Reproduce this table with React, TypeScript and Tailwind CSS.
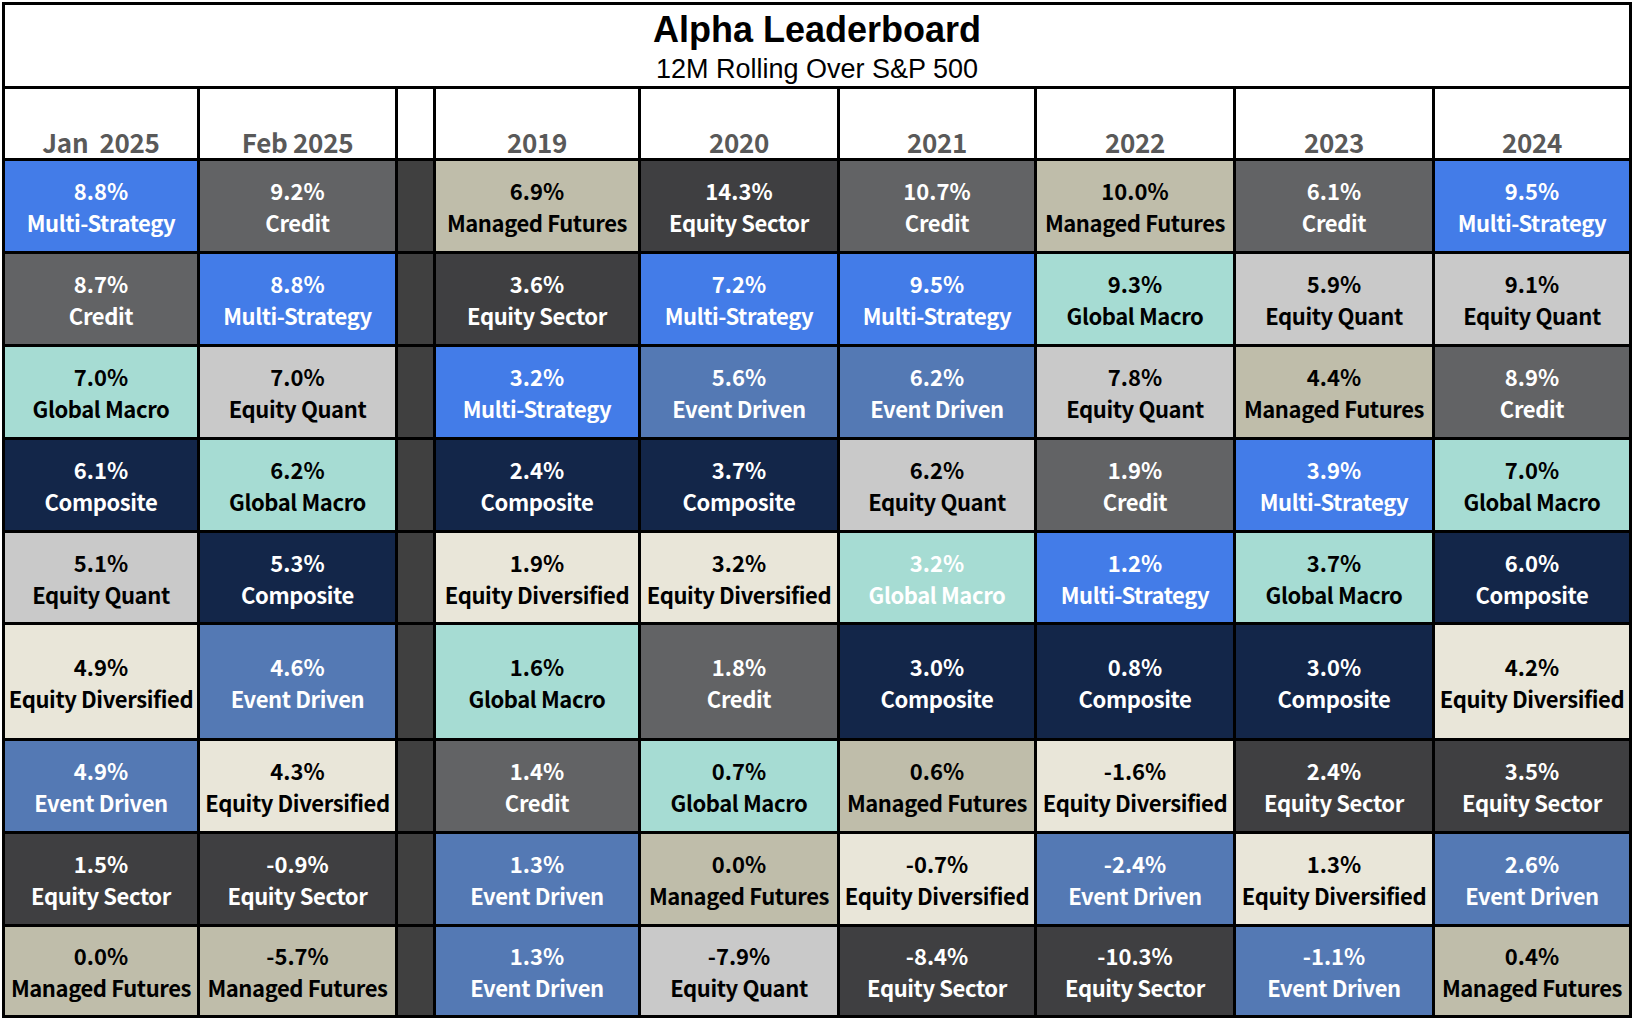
import React from "react";

type Cat =
  | "Multi-Strategy"
  | "Credit"
  | "Global Macro"
  | "Composite"
  | "Equity Quant"
  | "Equity Diversified"
  | "Event Driven"
  | "Equity Sector"
  | "Managed Futures";

const STYLE: Record<Cat, string> = {
  "Multi-Strategy": "bg-[#437ce8] text-white",
  Credit: "bg-[#626365] text-white",
  "Global Macro": "bg-[#a6dcd3] text-black",
  Composite: "bg-[#132649] text-white",
  "Equity Quant": "bg-[#c9c9c9] text-black",
  "Equity Diversified": "bg-[#e9e6d9] text-black",
  "Event Driven": "bg-[#5479b4] text-white",
  "Equity Sector": "bg-[#3f3f41] text-white",
  "Managed Futures": "bg-[#bfbdaa] text-black",
};

type Cell = [string, Cat, boolean?];

const LEFT: Cell[][] = [
  [["8.8%", "Multi-Strategy"], ["9.2%", "Credit"]],
  [["8.7%", "Credit"], ["8.8%", "Multi-Strategy"]],
  [["7.0%", "Global Macro"], ["7.0%", "Equity Quant"]],
  [["6.1%", "Composite"], ["6.2%", "Global Macro"]],
  [["5.1%", "Equity Quant"], ["5.3%", "Composite"]],
  [["4.9%", "Equity Diversified"], ["4.6%", "Event Driven"]],
  [["4.9%", "Event Driven"], ["4.3%", "Equity Diversified"]],
  [["1.5%", "Equity Sector"], ["-0.9%", "Equity Sector"]],
  [["0.0%", "Managed Futures"], ["-5.7%", "Managed Futures"]],
];

const RIGHT: Cell[][] = [
  [
    ["6.9%", "Managed Futures"],
    ["14.3%", "Equity Sector"],
    ["10.7%", "Credit"],
    ["10.0%", "Managed Futures"],
    ["6.1%", "Credit"],
    ["9.5%", "Multi-Strategy"],
  ],
  [
    ["3.6%", "Equity Sector"],
    ["7.2%", "Multi-Strategy"],
    ["9.5%", "Multi-Strategy"],
    ["9.3%", "Global Macro"],
    ["5.9%", "Equity Quant"],
    ["9.1%", "Equity Quant"],
  ],
  [
    ["3.2%", "Multi-Strategy"],
    ["5.6%", "Event Driven"],
    ["6.2%", "Event Driven"],
    ["7.8%", "Equity Quant"],
    ["4.4%", "Managed Futures"],
    ["8.9%", "Credit"],
  ],
  [
    ["2.4%", "Composite"],
    ["3.7%", "Composite"],
    ["6.2%", "Equity Quant"],
    ["1.9%", "Credit"],
    ["3.9%", "Multi-Strategy"],
    ["7.0%", "Global Macro"],
  ],
  [
    ["1.9%", "Equity Diversified"],
    ["3.2%", "Equity Diversified"],
    ["3.2%", "Global Macro", true],
    ["1.2%", "Multi-Strategy"],
    ["3.7%", "Global Macro"],
    ["6.0%", "Composite"],
  ],
  [
    ["1.6%", "Global Macro"],
    ["1.8%", "Credit"],
    ["3.0%", "Composite"],
    ["0.8%", "Composite"],
    ["3.0%", "Composite"],
    ["4.2%", "Equity Diversified"],
  ],
  [
    ["1.4%", "Credit"],
    ["0.7%", "Global Macro"],
    ["0.6%", "Managed Futures"],
    ["-1.6%", "Equity Diversified"],
    ["2.4%", "Equity Sector"],
    ["3.5%", "Equity Sector"],
  ],
  [
    ["1.3%", "Event Driven"],
    ["0.0%", "Managed Futures"],
    ["-0.7%", "Equity Diversified"],
    ["-2.4%", "Event Driven"],
    ["1.3%", "Equity Diversified"],
    ["2.6%", "Event Driven"],
  ],
  [
    ["1.3%", "Event Driven"],
    ["-7.9%", "Equity Quant"],
    ["-8.4%", "Equity Sector"],
    ["-10.3%", "Equity Sector"],
    ["-1.1%", "Event Driven"],
    ["0.4%", "Managed Futures"],
  ],
];

const ROW_H = [
  "h-[90px]",
  "h-[90px]",
  "h-[90px]",
  "h-[90px]",
  "h-[89px]",
  "h-[113px]",
  "h-[90px]",
  "h-[90px]",
  "h-[88px]",
];

const HEADERS = ["Jan\u00a0 2025", "Feb 2025", "", "2019", "2020", "2021", "2022", "2023", "2024"];

const CELL_FONT = {
  fontFamily: '"Noto Sans CJK JP", "Source Sans 3", "Open Sans", sans-serif',
};

function DataCell({ cell, h }: { cell: Cell; h: string }) {
  const [pct, cat, white] = cell;
  const cls = STYLE[cat];
  return (
    <div
      className={`${h} ${cls} ${white ? "!text-white" : ""} flex flex-col items-center justify-center text-[22px] font-bold leading-[32px] tracking-[-0.4px] whitespace-nowrap`}
      style={CELL_FONT}
    >
      <div className="tracking-[0px]">{pct}</div>
      <div>{cat}</div>
    </div>
  );
}

export default function App() {
  const cells: React.ReactNode[] = [];
  HEADERS.forEach((h, i) => {
    cells.push(
      <div
        key={`h${i}`}
        className="h-[69px] bg-white flex items-end justify-center pb-[1px] text-[26px] font-bold leading-[30px] tracking-[-0.3px] text-[#595959] whitespace-pre"
        style={CELL_FONT}
      >
        {h}
      </div>
    );
  });
  for (let r = 0; r < 9; r++) {
    const h = ROW_H[r];
    LEFT[r].forEach((c, i) => cells.push(<DataCell key={`l${r}-${i}`} cell={c} h={h} />));
    cells.push(<div key={`s${r}`} className={`${h} bg-[#404040]`} />);
    RIGHT[r].forEach((c, i) => cells.push(<DataCell key={`r${r}-${i}`} cell={c} h={h} />));
  }

  return (
    <div className="w-[1634px] h-[1028px] bg-white overflow-hidden">
      <div className="ml-[2px] mt-[2px] w-[1630px] bg-black p-[3px] flex flex-col gap-[3px]">
        <div
          className="h-[81px] bg-white flex flex-col items-center text-black"
          style={{ fontFamily: '"Liberation Sans", Arial, sans-serif' }}
        >
          <div className="mt-[6px] text-[36px] font-bold leading-[38px]">Alpha Leaderboard</div>
          <div className="mt-[5px] text-[27px] leading-[30px]">12M Rolling Over S&amp;P 500</div>
        </div>
        <div className="grid grid-cols-[192px_195px_35px_202px_196px_194px_196px_196px_194px] gap-[3px]">
          {cells}
        </div>
      </div>
    </div>
  );
}
